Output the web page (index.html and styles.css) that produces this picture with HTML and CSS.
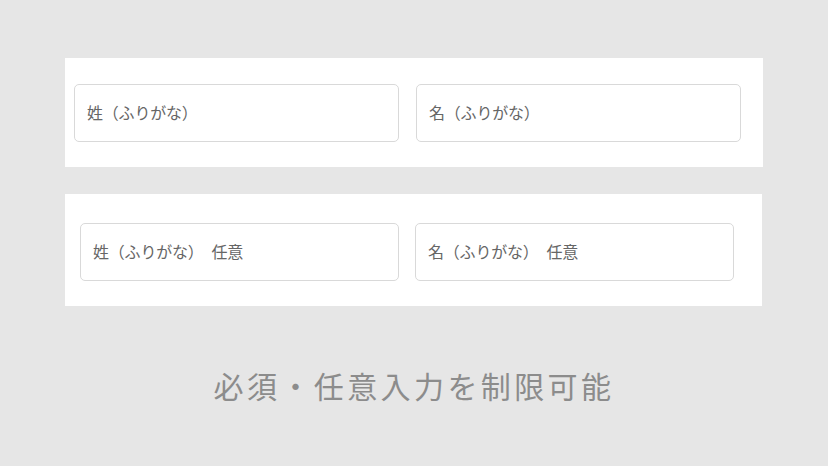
FILE: index.html
```html
<!DOCTYPE html>
<html lang="ja">
<head>
  <meta charset="UTF-8">
  <title>ふりがな入力</title>
  <link rel="stylesheet" href="styles.css">
</head>
<body>

  <!-- 必須 -->
  <div class="panel panel-required">
    <input class="kana" type="text" placeholder="姓（ふりがな）">
    <input class="kana" type="text" placeholder="名（ふりがな）">
  </div>

  <!-- 任意 -->
  <div class="panel panel-optional">
    <input class="kana" type="text" placeholder="姓（ふりがな）　任意">
    <input class="kana" type="text" placeholder="名（ふりがな）　任意">
  </div>

  <p class="caption">必須・任意入力を制限可能</p>

</body>
</html>
```

FILE: styles.css
```css
body {
  margin: 0;
  background: #e6e6e6;
  font-family: "Noto Sans CJK JP", "Noto Sans", sans-serif;
}
.panel {
  background: #fff;
  display: flex;
  margin-left: 65px;
  box-sizing: border-box;
}
.panel-required {
  width: 698px;
  margin-top: 58px;
  padding: 26px 0 25px 9px;
  gap: 17px;
}
.panel-optional {
  width: 697px;
  margin-top: 27px;
  padding: 29px 0 25px 15px;
  gap: 16px;
}
.kana {
  box-sizing: border-box;
  height: 58px;
  padding: 0 12px 2px;
  border: 1px solid #d9d9d9;
  border-radius: 5px;
  background: #fff;
  font-family: inherit;
  font-size: 16px;
  letter-spacing: -0.2px;
  color: #555;
  outline: none;
}
.kana::placeholder {
  color: #666;
}
.panel-required .kana {
  width: 325px;
}
.panel-optional .kana {
  width: 319px;
}
.caption {
  margin: 57px 0 0;
  text-align: center;
  font-size: 30px;
  letter-spacing: 3.4px;
  color: #8c8c8c;
}
```
